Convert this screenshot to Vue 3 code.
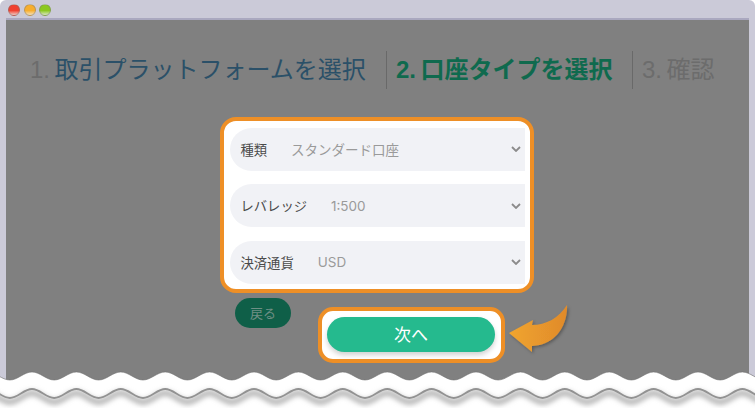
<script setup>
const period = 44.4
const first = 32 - period * 2
function wave(y, amp) {
  let d = `M ${first} ${y - amp}`
  for (let i = 0; i < 20; i++) {
    const x = first + i * period
    d += ` C ${x + period * 0.18} ${y - amp}, ${x + period * 0.32} ${y + amp}, ${x + period * 0.5} ${y + amp}`
    d += ` C ${x + period * 0.68} ${y + amp}, ${x + period * 0.82} ${y - amp}, ${x + period} ${y - amp}`
  }
  return d
}
const upper = wave(376, 4)
const lower = wave(393.5, 4.5)
const upperFill = `${upper} L 900 408 L -100 408 Z`
const rows = [
  { label: '種類', value: 'スタンダード口座' },
  { label: 'レバレッジ', value: '1:500' },
  { label: '決済通貨', value: 'USD' },
]
</script>

<template>
  <div class="window">
    <header class="titlebar">
      <span class="light red"></span>
      <span class="light amber"></span>
      <span class="light green"></span>
    </header>
    <main class="content">
      <nav class="steps">
        <div class="step first"><span class="num">1.</span>取引プラットフォームを選択</div>
        <div class="step second"><span class="num">2.</span>口座タイプを選択</div>
        <div class="step third"><span class="num">3.</span>確認</div>
      </nav>
      <section class="panel">
        <div v-for="row in rows" :key="row.label" class="row">
          <span class="label">{{ row.label }}</span>
          <span class="value">{{ row.value }}</span>
          <svg class="chevron" viewBox="0 0 10 6" width="10" height="6">
            <path d="M1 1 L5 5 L9 1" fill="none" stroke="#8b8b8b" stroke-width="1.8" />
          </svg>
        </div>
      </section>
      <div class="actions">
        <button class="back">戻る</button>
        <div class="next-box">
          <button class="next">次へ</button>
        </div>
      </div>
    </main>

    <svg class="arrow" viewBox="500 295 80 65" width="80" height="65">
      <defs>
        <linearGradient id="arrowFill" x1="0" x2="1" y1="0" y2="0">
          <stop offset="0" stop-color="#f0a52f" />
          <stop offset="1" stop-color="#e08a2b" />
        </linearGradient>
        <filter id="arrowShadow" x="-20%" y="-20%" width="150%" height="150%">
          <feDropShadow dx="1.5" dy="1.5" stdDeviation="1.5" flood-color="#000" flood-opacity="0.3" />
        </filter>
      </defs>
      <path
        d="M509 333 L533 320 L532 325 C546 325 559 318 567 305 C568 322 558 345 532 346 L532 352 Z"
        fill="url(#arrowFill)"
        filter="url(#arrowShadow)"
      />
    </svg>

    <svg class="torn" viewBox="0 0 755 408" width="755" height="408">
      <defs>
        <filter id="tornBlur" x="-5%" y="-100%" width="110%" height="300%">
          <feGaussianBlur stdDeviation="2.5" />
        </filter>
      </defs>
      <path :d="upperFill" fill="#fff" />
      <path :d="upper" fill="none" stroke="#6e6e6e" stroke-width="1" opacity="0.6" />
      <path :d="lower" transform="translate(0 4)" fill="none" stroke="#b8b8b8" stroke-width="6" filter="url(#tornBlur)" />
      <path :d="lower" fill="none" stroke="#929292" stroke-width="1.8" />
    </svg>
  </div>
</template>

<style scoped>
.window {
  position: relative;
  width: 755px;
  height: 408px;
  overflow: hidden;
  background: #cbcad8;
  border-radius: 6px 6px 0 0;
  font-family: "Liberation Sans", "Noto Sans CJK JP", sans-serif;
}
.titlebar {
  height: 18px;
  display: flex;
  align-items: center;
  gap: 3.5px;
  padding: 2px 0 0 8px;
  box-sizing: border-box;
  border-bottom: 0;
}
.light {
  width: 12px;
  height: 12px;
  border-radius: 50%;
  box-sizing: border-box;
  border: 1px solid rgba(120, 120, 120, 0.45);
}
.red { background: linear-gradient(#f04030 0 55%, #f3c9c2 100%); }
.amber { background: linear-gradient(#f7ae2e 0 55%, #f5e0bb 100%); }
.green { background: linear-gradient(#8cc820 0 55%, #dbe9c0 100%); }
.content {
  margin: 0 6px;
  height: 390px;
  box-sizing: border-box;
  background: #808080;
  border-top: 2px solid #aaa8bf;
  padding-top: 31px;
  font-family: "Liberation Sans", "Noto Sans CJK JP", sans-serif;
}
.steps {
  display: flex;
  align-items: center;
  height: 38px;
  padding-left: 24px;
}
.step {
  font-size: 24px;
  line-height: 38px;
  white-space: nowrap;
}
.num { margin-right: 4.5px; }
.first { color: #2b5068; width: 356px; }
.first .num, .third { color: #6c6c6c; }
.second {
  color: #0f6a4e;
  font-weight: 700;
  width: 246px;
  padding-left: 9px;
  box-sizing: border-box;
  border-left: 1px solid #696969;
}
.third {
  padding-left: 9px;
  border-left: 1px solid #696969;
}
.panel {
  width: 314px;
  height: 176px;
  margin: 28px 0 0 214px;
  box-sizing: border-box;
  padding: 6.5px 5px 5px 6px;
  border: 4px solid #ee8f26;
  border-radius: 16px;
  background: #fff;
  display: flex;
  flex-direction: column;
  gap: 13.3px;
}
.row {
  height: 43.3px;
  flex: none;
  display: flex;
  align-items: center;
  gap: 24px;
  padding-left: 10.5px;
  background: #f1f2f6;
  border-radius: 21.6px 0 0 21.6px;
  font-family: Inter, "Noto Sans CJK JP", sans-serif;
  font-size: 13.3px;
}
.label { color: #4a4a4a; }
.value { color: #9a9a9a; font-size: 13.5px; }
.chevron { margin-left: auto; margin-right: 4px; }
.actions {
  display: flex;
  align-items: flex-start;
  padding-left: 229px;
  font-family: "Noto Sans CJK JP", sans-serif;
}
.back {
  width: 56px;
  height: 30px;
  margin-top: 5px;
  border: 0;
  padding: 0 0 2px;
  border-radius: 15px;
  background: #0f5f48;
  color: #6f8f85;
  font: 13px "Noto Sans CJK JP", sans-serif;
}
.next-box {
  width: 187px;
  height: 56px;
  margin: 14px 0 0 27px;
  box-sizing: border-box;
  border: 4px solid #ee8f26;
  border-radius: 15px;
  background: #fff;
  padding: 6px 5px 0;
}
.next {
  display: block;
  width: 168px;
  height: 35px;
  border: 0;
  padding: 0 0 3px;
  border-radius: 17.5px;
  background: #25ba8e;
  color: #fff;
  font: 17px "Noto Sans CJK JP", sans-serif;
  box-shadow: 0 3px 5px rgba(0, 0, 0, 0.18);
}
.arrow {
  position: absolute;
  left: 500px;
  top: 295px;
}
.torn {
  position: absolute;
  left: 0;
  top: 0;
}
</style>
